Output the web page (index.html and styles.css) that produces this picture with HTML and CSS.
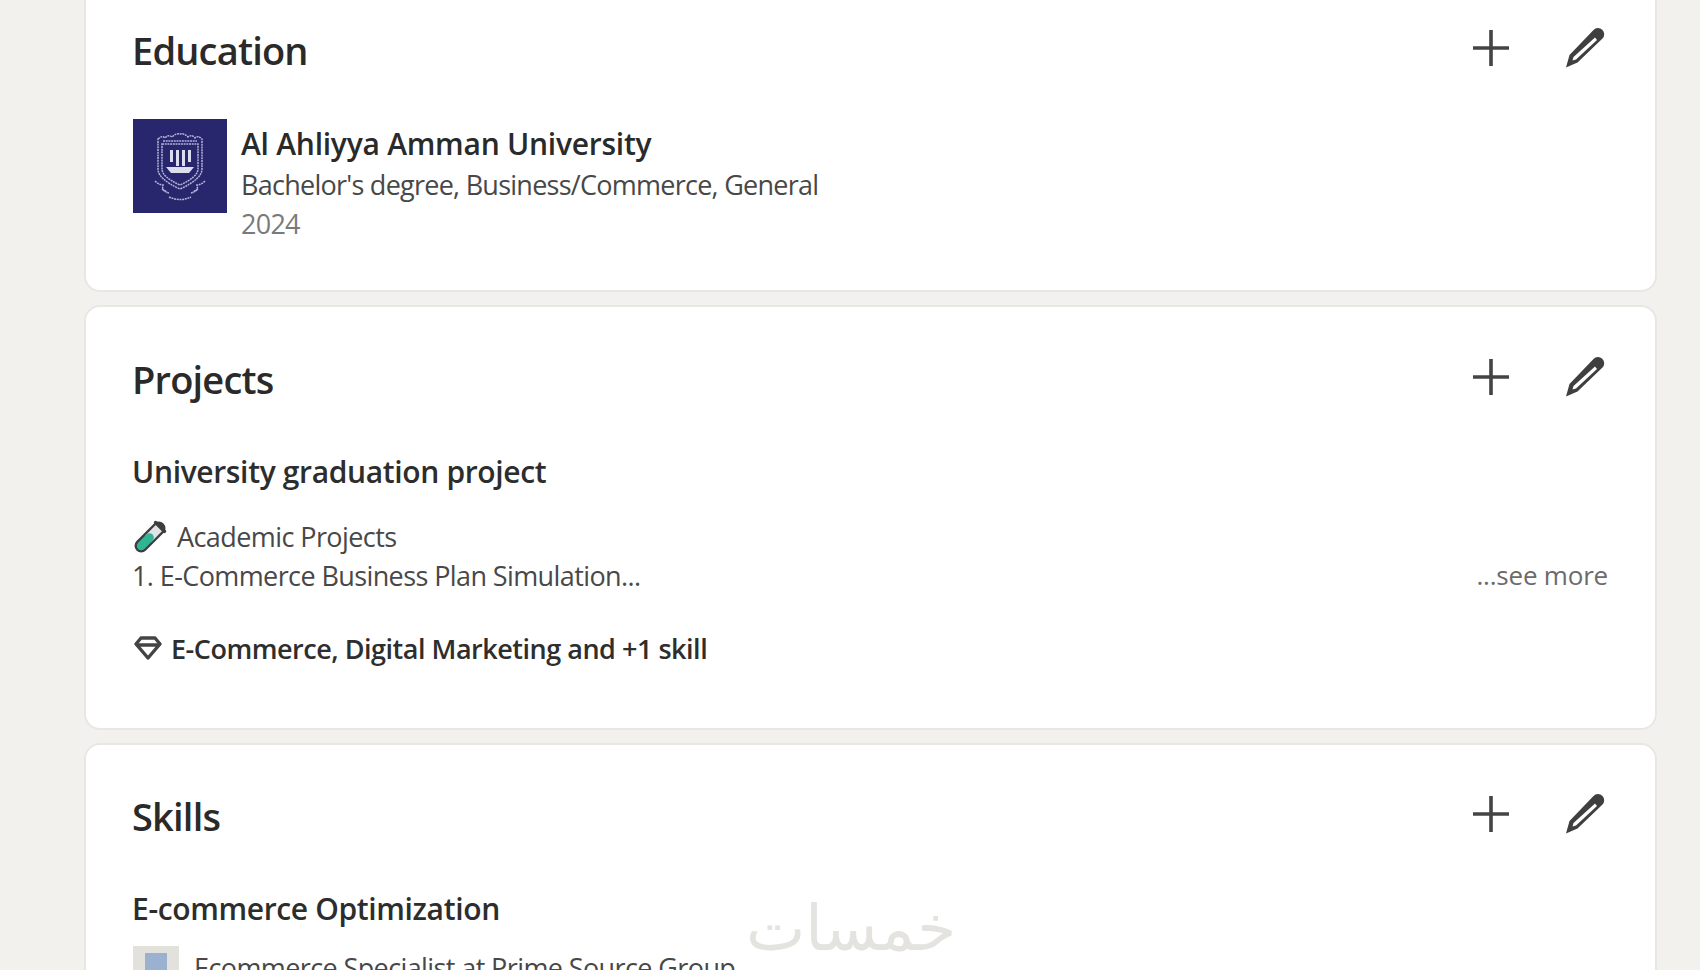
FILE: index.html
```html
<!DOCTYPE html>
<html lang="en">
<head>
<meta charset="utf-8">
<title>Profile sections</title>
<link rel="stylesheet" href="styles.css">
</head>
<body>
<svg class="defs" aria-hidden="true">
  <symbol id="plus" viewBox="0 0 36 36"><path d="M16.200 0h3.600v16.200H36v3.600H19.800V36h-3.600V19.800H0v-3.600h16.200z"/></symbol>
  <symbol id="pencil" viewBox="0 0 40 40"><path fill-rule="evenodd" d="M28.500 2a6 6 0 0 1 9 8.500L12.500 34.500 1 39.500 4.500 27zM30 9.500 8.500 29l-1 3.500 3.500-1L32 12z"/></symbol>
  <symbol id="flask" viewBox="0 0 32 32">
    <path fill="none" stroke="#3d3d3d" stroke-width="13" stroke-linecap="round" d="M7 25 24 8"/>
    <path fill="none" stroke="#dfe3e6" stroke-width="8.500" d="M14 18 26 6"/>
    <path fill="none" stroke="#2fb594" stroke-width="8.500" stroke-linecap="round" d="M7 25l8-8"/>
    <path fill="none" stroke="#3d3d3d" stroke-width="3.500" stroke-linecap="round" d="M21 2.500 29.500 11"/>
  </symbol>
  <symbol id="gem" viewBox="0 0 28 24"><path fill="none" stroke="#444" stroke-width="3.400" stroke-linejoin="round" d="M7 2h14l5 6-12 14L2 8zM4 9h20"/></symbol>
</svg>

<main class="page">
  <section class="card card-first">
    <header class="card-head">
      <h2>Education</h2>
      <div class="actions">
        <svg class="icon-plus"><use href="#plus"/></svg>
        <svg class="icon-pencil"><use href="#pencil"/></svg>
      </div>
    </header>
    <div class="edu">
      <svg class="logo" viewBox="0 0 94 94">
        <rect width="94" height="94" fill="#28266c"/>
        <g fill="none" stroke="#b0b2d8" stroke-width="1.500" stroke-dasharray="2 .7">
          <path d="M25 20q4-4 7-1 3-4 7-1 4-4 8-3 4-1 8 3 4-3 7 1 3-3 7 1v30q0 10-22 20-22-10-22-20z"/>
          <path d="M29 25h36v25q0 8-18 16-18-8-18-16z"/>
          <path d="M30 22h34M22 62q4 4 8 4-2 6 6 8m36-12q-4 4-8 4 2 6-6 8M36 78q11 5 22 0M29 70l5 3M65 70l-5 3"/>
        </g>
        <g fill="#dcddef">
          <path d="M37 31h3v12h-3zM43 31h3v16h-3zM49 31h3v16h-3zM55 31h3v12h-3z"/>
          <path d="M33 48h28l-5 6H38z"/>
        </g>
      </svg>
      <div class="edu-text">
        <div class="school">Al Ahliyya Amman University</div>
        <div class="degree">Bachelor's degree, Business/Commerce, General</div>
        <div class="year">2024</div>
      </div>
    </div>
  </section>

  <section class="card card-projects">
    <header class="card-head">
      <h2>Projects</h2>
      <div class="actions">
        <svg class="icon-plus"><use href="#plus"/></svg>
        <svg class="icon-pencil"><use href="#pencil"/></svg>
      </div>
    </header>
    <h3 class="item-title">University graduation project</h3>
    <div class="assoc">
      <svg class="icon-flask"><use href="#flask"/></svg>
      <span>Academic Projects</span>
    </div>
    <div class="desc">
      <span>1. E-Commerce Business Plan Simulation...</span>
      <span class="more">...see more</span>
    </div>
    <div class="skills-line">
      <svg class="icon-gem"><use href="#gem"/></svg>
      <span>E-Commerce, Digital Marketing and +1 skill</span>
    </div>
  </section>

  <section class="card card-skills">
    <header class="card-head">
      <h2>Skills</h2>
      <div class="actions">
        <svg class="icon-plus"><use href="#plus"/></svg>
        <svg class="icon-pencil"><use href="#pencil"/></svg>
      </div>
    </header>
    <h3 class="item-title">E-commerce Optimization</h3>
    <div class="endorse">
      <div class="thumb"><div class="thumb-inner"></div></div>
      <span>Ecommerce Specialist at Prime Source Group</span>
    </div>
  </section>
</main>
<div class="watermark" dir="rtl" lang="ar">خمسات</div>
</body>
</html>
```

FILE: styles.css
```css
* { box-sizing: border-box; }
html, body { margin: 0; height: 970px; overflow: hidden; }
body {
  background: #f2f1ee;
  color: #2b2b2b;
  font-family: "Open Sans", "Noto Sans", sans-serif;
  position: relative;
}
.defs { position: absolute; width: 0; height: 0; }
.page {
  width: 1573px;
  margin-left: 84px;
  display: flex;
  flex-direction: column;
  gap: 13px;
}
.card {
  background: #fff;
  border: 2px solid #e8e7e3;
  border-radius: 16px;
  padding: 0 46px;
}
.card-first { height: 292px; border-top: 0; border-radius: 0 0 16px 16px; padding-top: 23px; }
.card-projects { height: 425px; padding-top: 45px; }
.card-skills { height: 300px; padding-top: 44px; }
.card-head {
  display: flex;
  justify-content: space-between;
  align-items: flex-start;
  height: 54px;
}
h2 {
  margin: 0;
  font-size: 38px;
  line-height: 54px;
  font-weight: 600;
  letter-spacing: -.8px;
  color: #2a2a2a;
}
.actions { display: flex; align-items: center; gap: 56px; padding-right: 4px; height: 48px; margin-top: 1px; }
.icon-plus { width: 36px; height: 36px; fill: #444; display: block; }
.icon-pencil { width: 40px; height: 40px; fill: #3f3f3f; display: block; }
.edu { display: flex; gap: 14px; margin-top: 42px; padding-left: 1px; }
.logo { width: 94px; height: 94px; display: block; flex: none; }
.edu-text { display: flex; flex-direction: column; padding-top: 3px; }
.school { font-size: 30px; line-height: 43px; font-weight: 600; letter-spacing: -.25px; color: #2a2a2a; }
.degree { font-size: 27px; line-height: 40px; letter-spacing: -.74px; color: #484848; }
.year { font-size: 27px; line-height: 38px; letter-spacing: -.74px; color: #7a7a7a; }
.item-title { margin: 44px 0 0; font-size: 30px; line-height: 44px; font-weight: 600; letter-spacing: -.35px; color: #2d2d2d; }
.assoc { display: flex; align-items: center; gap: 10px; margin-top: 20px; height: 44px; padding-left: 2px; font-size: 27px; letter-spacing: -.58px; color: #484848; }
.icon-flask { width: 33px; height: 33px; display: block; }
.desc { display: flex; justify-content: space-between; align-items: center; height: 34px; padding-right: 1px; font-size: 27px; letter-spacing: -.6px; color: #484848; }
.more { color: #6b6b6b; font-size: 26px; letter-spacing: -.2px; }
.skills-line { display: flex; align-items: center; gap: 9px; margin-top: 36px; height: 40px; padding-left: 2px; font-size: 27px; font-weight: 600; letter-spacing: -.48px; color: #2e2e2e; }
.icon-gem { width: 28px; height: 24px; display: block; }
.endorse { display: flex; gap: 15px; margin-top: 15px; padding-left: 1px; font-size: 27px; letter-spacing: -.6px; color: #484848; }
.thumb { width: 46px; height: 46px; background: #e2e1dc; display: flex; justify-content: center; padding-top: 7px; flex: none; }
.thumb-inner { width: 22px; height: 39px; background: #9ab2cf; }
.endorse span { padding-top: 3px; }
.watermark {
  position: absolute;
  left: 746px;
  top: 889px;
  font-family: "DejaVu Sans", sans-serif;
  font-size: 63px;
  line-height: 80px;
  color: #e4e3df;
}
```
